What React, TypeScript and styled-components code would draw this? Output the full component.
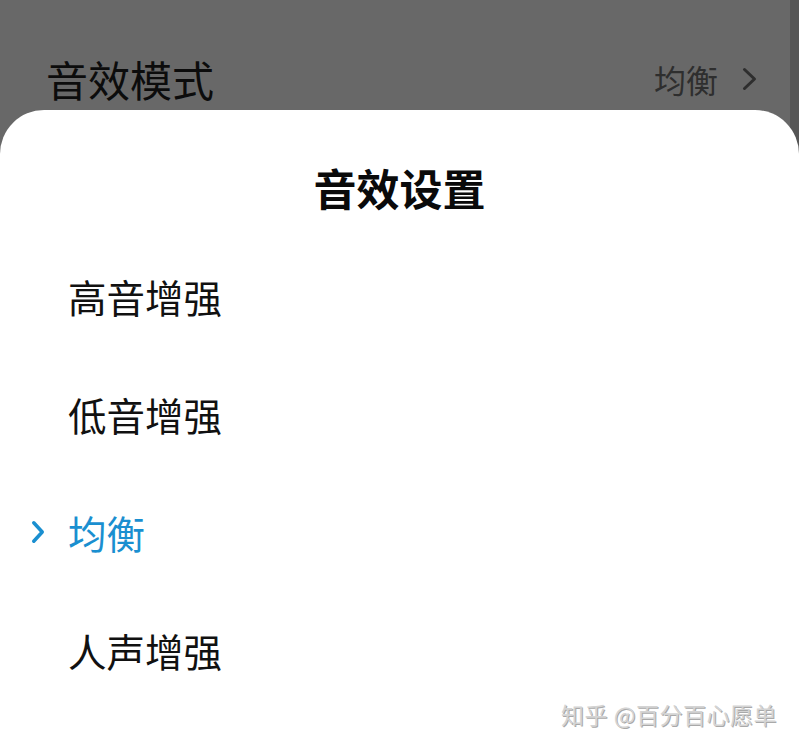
import React from "react";
import styled, { createGlobalStyle } from "styled-components";

const GlobalStyle = createGlobalStyle`
    html, body {
        margin: 0;
        padding: 0;
    }
    body {
        font-family: "Noto Sans CJK SC", "Noto Sans", sans-serif;
        overflow: hidden;
    }
`;

const Screen = styled.div`
    position: relative;
    display: flex;
    flex-direction: column;
    width: 799px;
    height: 749px;
    overflow: hidden;
    background: linear-gradient(to right, #686868 790px, #565656 790px);
`;

const SettingRow = styled.div`
    display: flex;
    align-items: center;
    justify-content: space-between;
    box-sizing: border-box;
    height: 110px;
    padding: 48px 42px 0 46px;
`;

const SettingLabel = styled.span`
    font-size: 42px;
    line-height: 50px;
    color: #0c0c0c;
`;

const SettingValue = styled.span`
    display: flex;
    align-items: center;
    gap: 24px;
    font-size: 32px;
    line-height: 40px;
    color: #2e2e2e;
`;

const Sheet = styled.div`
    flex: 1;
    background: #ffffff;
    border-radius: 44px 44px 0 0;
`;

const SheetTitle = styled.h2`
    margin: 0 0 20px;
    padding-top: 47px;
    font-size: 43px;
    line-height: 60px;
    font-weight: 700;
    text-align: center;
    color: #0a0a0a;
`;

const OptionList = styled.ul`
    list-style: none;
    margin: 0;
    padding: 0;
`;

const OptionRow = styled.li<{ $active?: boolean }>`
    display: flex;
    align-items: center;
    height: 118px;
    font-size: 38.5px;
    color: ${p => (p.$active ? "#1a8fd0" : "#111111")};
`;

const Marker = styled.span`
    display: flex;
    align-items: center;
    justify-content: center;
    width: 68px;
    padding-left: 8px;
    box-sizing: border-box;
`;

const Watermark = styled.div`
    position: absolute;
    right: 22px;
    bottom: 18px;
    font-size: 23px;
    letter-spacing: 0.5px;
    color: #d4d4d4;
    text-shadow: 1px 1px 0 #a9a9a9;
`;

const Chevron = ({ color, width, height, stroke }: { color: string; width: number; height: number; stroke: number }) => (
    <svg width={width} height={height} viewBox={`0 0 ${width} ${height}`} fill="none">
        <path
            d={`M${stroke / 2 + 1} ${stroke / 2 + 1} L${width - stroke / 2 - 1} ${height / 2} L${stroke / 2 + 1} ${height - stroke / 2 - 1}`}
            stroke={color}
            strokeWidth={stroke}
            strokeLinecap="round"
            strokeLinejoin="round"
        />
    </svg>
);

const options = ["高音增强", "低音增强", "均衡", "人声增强"];
const selected = "均衡";

const App = () => (
    <>
        <GlobalStyle />
        <Screen>
            <SettingRow>
                <SettingLabel>音效模式</SettingLabel>
                <SettingValue>
                    均衡
                    <Chevron color="#2e2e2e" width={15} height={24} stroke={3} />
                </SettingValue>
            </SettingRow>
            <Sheet>
                <SheetTitle>音效设置</SheetTitle>
                <OptionList>
                    {options.map(name => (
                        <OptionRow key={name} $active={name === selected}>
                            <Marker>
                                {name === selected && <Chevron color="#1a8fd0" width={14} height={24} stroke={3.5} />}
                            </Marker>
                            {name}
                        </OptionRow>
                    ))}
                </OptionList>
            </Sheet>
            <Watermark>知乎 @百分百心愿单</Watermark>
        </Screen>
    </>
);

export default App;
